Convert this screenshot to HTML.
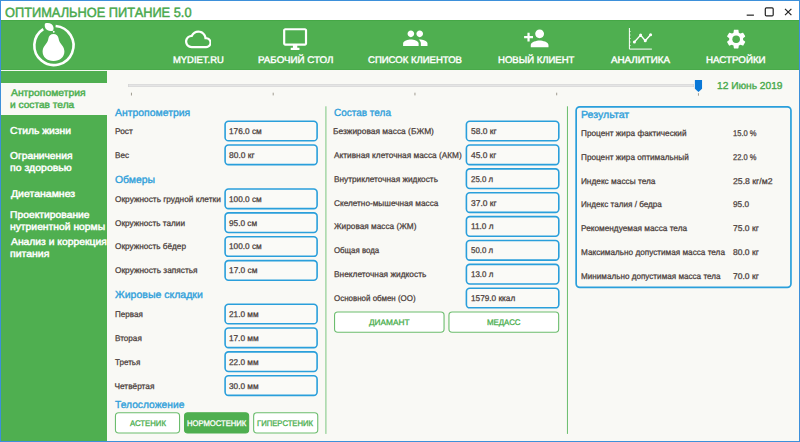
<!DOCTYPE html>
<html lang="ru"><head><meta charset="utf-8"><title>ОПТИМАЛЬНОЕ ПИТАНИЕ 5.0</title>
<style>
html,body{margin:0;padding:0;}
body{width:800px;height:442px;overflow:hidden;position:relative;background:#f9f9f5;font-family:"Liberation Sans", sans-serif;}
.t{position:absolute;white-space:pre;line-height:1;transform-origin:0 50%;text-rendering:geometricPrecision;}
.abs{position:absolute;}
.box{position:absolute;box-sizing:border-box;border:1.6px solid #2a9fdb;border-radius:4px;background:#fafaf7;}
.btn{position:absolute;box-sizing:border-box;border:1px solid #6dbd6f;border-radius:3px;background:#ffffff;}
.btn.sel{background:#4faf50;border-color:#4faf50;}
</style></head><body>
<div class="abs" style="left:0;top:0;width:800px;height:442px;background:#3d90da"></div>
<div class="abs" style="left:1px;top:1px;width:798px;height:440px;background:#f9f9f5"></div>
<div class="abs" style="left:1px;top:1px;width:798px;height:19px;background:#ffffff"></div>
<div class="abs" style="left:1px;top:20px;width:798px;height:50px;background:#4faf50"></div>
<div class="abs" style="left:1px;top:20px;width:798px;height:1px;background:#45a746"></div>
<div class="abs" style="left:1px;top:70px;width:106px;height:371px;background:#4faf50"></div>
<div class="abs" style="left:1px;top:70px;width:106px;height:1px;background:#f3faf1"></div>
<div class="abs" style="left:1px;top:69px;width:798px;height:1px;background:#49a94a"></div>
<div class="abs" style="left:1px;top:83px;width:106px;height:31.5px;background:#f9f9f5"></div>
<!-- window controls -->
<svg class="abs" style="left:740px;top:2px" width="58" height="17" viewBox="740 2 58 17" fill="none" stroke="#222" stroke-width="1.2">
<line x1="746.700" y1="15.150" x2="753.900" y2="15.150"/>
<rect x="765.300" y="7.850" width="7.900" height="7.950" rx="1.1"/>
<path d="M785.000 8.900 L791.400 15.100 M791.400 8.900 L785.000 15.100"/>
</svg>
<!-- logo -->
<svg class="abs" style="left:28px;top:20px" width="52" height="50" viewBox="28 20 52 50">
<path d="M55.61 25.97 A19.6 19.6 0 1 1 43.23 29.06" fill="none" stroke="#fff" stroke-width="2.6"/>
<path d="M53.5 34.1 C56.3 34.1 58.3 36.0 58.6 38.6 C58.9 41.2 60.2 43.0 62.0 45.2 C63.6 47.2 64.4 49.2 64.4 51.600 C64.4 57.2 60.0 61.0 53.5 61.0 C47.0 61.0 42.6 57.2 42.6 51.600 C42.6 49.2 43.4 47.2 45.0 45.2 C46.8 43.0 48.1 41.2 48.4 38.6 C48.7 36.0 50.7 34.1 53.5 34.1 Z" fill="#fff"/>
<path d="M45.0 23.600 C48.500 22.300 52.600 23.600 53.400 26.900 C53.800 28.600 53.400 30.000 52.800 30.800 C49.400 31.600 46.000 30.200 45.000 27.200 C44.600 25.900 44.700 24.600 45.000 23.600 Z" fill="#fff"/>
<circle cx="53.75" cy="31.700" r="0.95" fill="#fff"/>
</svg>
<!-- cloud -->
<svg class="abs" style="left:184.5px;top:25.55px" width="26.7" height="26.7" viewBox="0 0 24 24" fill="#fff"><path d="M19.35 10.04C18.67 6.59 15.64 4 12 4 9.11 4 6.6 5.64 5.35 8.04 2.34 8.36 0 10.91 0 14c0 3.310 2.690 6 6 6h13c2.760 0 5-2.240 5-5 0-2.640-2.050-4.780-4.650-4.960zM19 18H6c-2.210 0-4-1.790-4-4s1.790-4 4-4h.71C7.370 7.690 9.480 6 12 6c3.040 0 5.500 2.460 5.500 5.500v.5H19c1.660 0 3 1.340 3 3s-1.340 3-3 3z"/></svg>
<!-- desktop -->
<svg class="abs" style="left:282.4px;top:25.8px" width="26.2" height="26.2" viewBox="0 0 24 24" fill="#fff"><path d="M21 2H3c-1.100 0-2 .9-2 2v12c0 1.100.9 2 2 2h7v2H8v2h8v-2h-2v-2h7c1.100 0 2-.9 2-2V4c0-1.100-.9-2-2-2zm0 14H3V4h18v12z"/></svg>
<!-- people -->
<svg class="abs" style="left:402px;top:25.45px" width="26.6" height="26.6" viewBox="0 0 24 24" fill="#fff"><path d="M16 11c1.660 0 2.990-1.340 2.990-3S17.660 5 16 5c-1.660 0-3 1.340-3 3s1.340 3 3 3zm-8 0c1.660 0 2.990-1.340 2.990-3S9.660 5 8 5C6.340 5 5 6.340 5 8s1.340 3 3 3zm0 2c-2.330 0-7 1.170-7 3.500V19h14v-2.500c0-2.330-4.670-3.500-7-3.500zm8 0c-.29 0-.62.020-.97.050 1.160.84 1.970 1.970 1.970 3.450V19h6v-2.500c0-2.330-4.670-3.500-7-3.500z"/></svg>
<!-- person add -->
<svg class="abs" style="left:522.9px;top:25.3px" width="26.6" height="26.6" viewBox="0 0 24 24" fill="#fff"><path d="M15 12c2.210 0 4-1.790 4-4s-1.790-4-4-4-4 1.790-4 4 1.790 4 4 4zm-9-2V7H4v3H1v2h3v3h2v-3h3v-2H6zm9 4c-2.670 0-8 1.340-8 4v2h16v-2c0-2.660-5.330-4-8-4z"/></svg>
<!-- analytics -->
<svg class="abs" style="left:625px;top:25px" width="32" height="28" viewBox="625 25 32 28" fill="none" stroke="#fff">
<path d="M629.4 28 V49.1 H651.9" stroke-width="1"/>
<path d="M629.4 31.5h1.4M629.4 35h1.4M629.4 38.5h1.4M629.4 42h1.4M629.4 45.500h1.400" stroke-width="0.6"/>
<path d="M634.4 42 L640.6 35.1 L645.25 40.75 L650.6 34.75" stroke-width="1.4" stroke-linejoin="round"/>
<g fill="#fff" stroke="none"><circle cx="634.4" cy="42" r="1.5"/><circle cx="640.6" cy="35.1" r="1.5"/><circle cx="645.25" cy="40.75" r="1.5"/><circle cx="650.6" cy="34.75" r="1.5"/></g>
</svg>
<!-- settings -->
<svg class="abs" style="left:724.75px;top:28.25px" width="22.3" height="22.3" viewBox="0 0 24 24" fill="#fff"><path d="M19.430 12.980c.04-.32.070-.64.070-.98s-.03-.66-.07-.98l2.110-1.650c.19-.15.24-.42.120-.64l-2-3.460c-.12-.22-.39-.3-.61-.22l-2.490 1c-.52-.4-1.080-.73-1.690-.98l-.38-2.650C14.460 2.180 14.250 2 14 2h-4c-.25 0-.46.180-.49.420l-.38 2.650c-.61.250-1.170.59-1.690.98l-2.490-1c-.23-.09-.49 0-.61.220l-2 3.460c-.13.220-.07.490.12.640l2.110 1.650c-.04.320-.07.650-.07.980s.03.660.07.980l-2.110 1.650c-.19.150-.24.420-.12.640l2 3.460c.12.220.39.300.61.220l2.490-1c.52.400 1.080.73 1.690.98l.38 2.650c.03.240.24.420.49.420h4c.25 0 .46-.18.490-.42l.38-2.650c.61-.25 1.170-.59 1.690-.98l2.490 1c.23.090.49 0 .61-.22l2-3.460c.12-.22.070-.49-.12-.64l-2.110-1.650zM12 15.500c-1.930 0-3.500-1.570-3.500-3.500s1.570-3.500 3.500-3.500 3.500 1.570 3.500 3.500-1.570 3.500-3.500 3.500z"/><circle cx="12" cy="12" r="4.05" fill="#4faf50"/></svg>
<!-- slider -->
<div class="abs" style="left:127.9px;top:83.9px;width:566px;height:3.1px;background:#e5e5e5;box-shadow:inset 0 0 0 0.6px #d3d3d3"></div>
<svg class="abs" style="left:125px;top:78px" width="585" height="20" viewBox="125 78 585 20">
<g stroke="#a09c90" stroke-width="1"><path d="M131.45 92.700v2.800M273.200 92.700v2.700M414.950 92.700v2.700M556.700 92.700v2.600M698.450 93.200v2.500"/></g>
<path d="M694.900 79.900 h7.150 v8.900 l-3.575 3.200 l-3.575 -3.200 z" fill="#0a78d7"/>
</svg>
<!-- dividers -->
<svg class="abs" style="left:320px;top:100px" width="260" height="340" viewBox="320 100 260 340">
<rect x="325.150" y="106.300" width="1.450" height="327.600" fill="#a3d6a4"/>
<rect x="566.950" y="106.300" width="0.950" height="327.600" fill="#62ba65"/>
</svg>

<svg class="abs" style="left:0;top:0" width="800" height="442" viewBox="0 0 800 442">
<rect x="225.10" y="121.20" width="92.00" height="19.60" rx="3.4" fill="#fafaf7" stroke="#2a9fdb" stroke-width="1.6"/>
<rect x="225.10" y="145.06" width="92.00" height="19.60" rx="3.4" fill="#fafaf7" stroke="#2a9fdb" stroke-width="1.6"/>
<rect x="225.10" y="189.00" width="92.00" height="19.60" rx="3.4" fill="#fafaf7" stroke="#2a9fdb" stroke-width="1.6"/>
<rect x="225.10" y="212.86" width="92.00" height="19.60" rx="3.4" fill="#fafaf7" stroke="#2a9fdb" stroke-width="1.6"/>
<rect x="225.10" y="236.72" width="92.00" height="19.60" rx="3.4" fill="#fafaf7" stroke="#2a9fdb" stroke-width="1.6"/>
<rect x="225.10" y="260.58" width="92.00" height="19.60" rx="3.4" fill="#fafaf7" stroke="#2a9fdb" stroke-width="1.6"/>
<rect x="225.10" y="304.20" width="92.00" height="19.60" rx="3.4" fill="#fafaf7" stroke="#2a9fdb" stroke-width="1.6"/>
<rect x="225.10" y="328.06" width="92.00" height="19.60" rx="3.4" fill="#fafaf7" stroke="#2a9fdb" stroke-width="1.6"/>
<rect x="225.10" y="351.92" width="92.00" height="19.60" rx="3.4" fill="#fafaf7" stroke="#2a9fdb" stroke-width="1.6"/>
<rect x="225.10" y="375.78" width="92.00" height="19.60" rx="3.4" fill="#fafaf7" stroke="#2a9fdb" stroke-width="1.6"/>
<rect x="115.45" y="412.75" width="64.10" height="20.30" rx="3.2" fill="#ffffff" stroke="#6cbd6e" stroke-width="1.1"/>
<rect x="184.55" y="412.75" width="64.10" height="20.30" rx="3.2" fill="#4faf50" stroke="#4faf50" stroke-width="1.1"/>
<rect x="253.65" y="412.75" width="64.10" height="20.30" rx="3.2" fill="#ffffff" stroke="#6cbd6e" stroke-width="1.1"/>
<rect x="466.40" y="121.20" width="92.40" height="19.60" rx="3.4" fill="#fafaf7" stroke="#2a9fdb" stroke-width="1.6"/>
<rect x="466.40" y="145.06" width="92.40" height="19.60" rx="3.4" fill="#fafaf7" stroke="#2a9fdb" stroke-width="1.6"/>
<rect x="466.40" y="168.92" width="92.40" height="19.60" rx="3.4" fill="#fafaf7" stroke="#2a9fdb" stroke-width="1.6"/>
<rect x="466.40" y="192.78" width="92.40" height="19.60" rx="3.4" fill="#fafaf7" stroke="#2a9fdb" stroke-width="1.6"/>
<rect x="466.40" y="216.64" width="92.40" height="19.60" rx="3.4" fill="#fafaf7" stroke="#2a9fdb" stroke-width="1.6"/>
<rect x="466.40" y="240.50" width="92.40" height="19.60" rx="3.4" fill="#fafaf7" stroke="#2a9fdb" stroke-width="1.6"/>
<rect x="466.40" y="264.36" width="92.40" height="19.60" rx="3.4" fill="#fafaf7" stroke="#2a9fdb" stroke-width="1.6"/>
<rect x="466.40" y="288.22" width="92.40" height="19.60" rx="3.4" fill="#fafaf7" stroke="#2a9fdb" stroke-width="1.6"/>
<rect x="334.55" y="312.05" width="109.50" height="20.20" rx="3.2" fill="#ffffff" stroke="#6cbd6e" stroke-width="1.1"/>
<rect x="448.95" y="312.05" width="109.70" height="20.20" rx="3.2" fill="#ffffff" stroke="#6cbd6e" stroke-width="1.1"/>
<rect x="576.15" y="106.85" width="214.80" height="180.60" rx="3.6" fill="none" stroke="#2a9fdb" stroke-width="1.7"/>
</svg>
<span class="t" style="left:4.82px;top:6.00px;font-size:13.4px;color:#47a84b;transform:scaleX(0.9565);-webkit-text-stroke:0.45px #47a84b;">ОПТИМАЛЬНОЕ ПИТАНИЕ 5.0</span>
<span class="t" style="left:172.51px;top:56.00px;font-size:9.6px;color:#ffffff;transform:scaleX(0.9813);-webkit-text-stroke:0.4px #ffffff;">MYDIET.RU</span>
<span class="t" style="left:257.99px;top:56.00px;font-size:9.6px;color:#ffffff;transform:scaleX(1.0178);-webkit-text-stroke:0.4px #ffffff;">РАБОЧИЙ СТОЛ</span>
<span class="t" style="left:368.25px;top:56.00px;font-size:9.6px;color:#ffffff;transform:scaleX(0.9936);-webkit-text-stroke:0.4px #ffffff;">СПИСОК КЛИЕНТОВ</span>
<span class="t" style="left:497.60px;top:56.00px;font-size:9.6px;color:#ffffff;transform:scaleX(0.9954);-webkit-text-stroke:0.4px #ffffff;">НОВЫЙ КЛИЕНТ</span>
<span class="t" style="left:610.51px;top:56.00px;font-size:9.6px;color:#ffffff;transform:scaleX(1.0214);-webkit-text-stroke:0.4px #ffffff;">АНАЛИТИКА</span>
<span class="t" style="left:706.19px;top:56.00px;font-size:9.6px;color:#ffffff;transform:scaleX(1.0174);-webkit-text-stroke:0.4px #ffffff;">НАСТРОЙКИ</span>
<span class="t" style="left:10.56px;top:89.00px;font-size:10px;color:#4caf50;transform:scaleX(1.0333);-webkit-text-stroke:0.45px #4caf50;">Антропометрия</span>
<span class="t" style="left:9.79px;top:101.00px;font-size:10px;color:#4caf50;transform:scaleX(1.0159);-webkit-text-stroke:0.45px #4caf50;">и состав тела</span>
<span class="t" style="left:10.04px;top:127.00px;font-size:10px;color:#ffffff;transform:scaleX(1.0308);-webkit-text-stroke:0.45px #ffffff;">Стиль жизни</span>
<span class="t" style="left:10.04px;top:152.00px;font-size:10px;color:#ffffff;transform:scaleX(1.0257);-webkit-text-stroke:0.45px #ffffff;">Ограничения</span>
<span class="t" style="left:9.77px;top:164.00px;font-size:10px;color:#ffffff;transform:scaleX(1.0517);-webkit-text-stroke:0.45px #ffffff;">по здоровью</span>
<span class="t" style="left:10.56px;top:190.00px;font-size:10px;color:#ffffff;transform:scaleX(1.0498);-webkit-text-stroke:0.45px #ffffff;">Диетанамнез</span>
<span class="t" style="left:9.78px;top:211.00px;font-size:10px;color:#ffffff;transform:scaleX(1.0327);-webkit-text-stroke:0.45px #ffffff;">Проектирование</span>
<span class="t" style="left:9.78px;top:223.00px;font-size:10px;color:#ffffff;transform:scaleX(1.0334);-webkit-text-stroke:0.45px #ffffff;">нутриентной нормы</span>
<span class="t" style="left:10.56px;top:238.00px;font-size:10px;color:#ffffff;transform:scaleX(1.0324);-webkit-text-stroke:0.45px #ffffff;">Анализ и коррекция</span>
<span class="t" style="left:9.78px;top:250.00px;font-size:10px;color:#ffffff;transform:scaleX(1.0476);-webkit-text-stroke:0.45px #ffffff;">питания</span>
<span class="t" style="left:717.10px;top:82.00px;font-size:10.1px;color:#48aa4c;transform:scaleX(1.0086);-webkit-text-stroke:0.35px #48aa4c;">12 Июнь 2019</span>
<span class="t" style="left:115.25px;top:109.00px;font-size:10.3px;color:#2f9fda;transform:scaleX(1.0135);-webkit-text-stroke:0.35px #2f9fda;">Антропометрия</span>
<span class="t" style="left:114.50px;top:127.00px;font-size:8.3px;color:#4a3d3a;transform:scaleX(1.0087);-webkit-text-stroke:0.25px #4a3d3a;">Рост</span>
<span class="t" style="left:228.90px;top:127.00px;font-size:8.3px;color:#4a3d3a;transform:scaleX(0.9938);-webkit-text-stroke:0.25px #4a3d3a;">176.0 см</span>
<span class="t" style="left:114.51px;top:151.00px;font-size:8.3px;color:#4a3d3a;transform:scaleX(0.9818);-webkit-text-stroke:0.25px #4a3d3a;">Вес</span>
<span class="t" style="left:229.15px;top:151.00px;font-size:8.3px;color:#4a3d3a;transform:scaleX(1.0182);-webkit-text-stroke:0.25px #4a3d3a;">80.0 кг</span>
<span class="t" style="left:114.75px;top:176.00px;font-size:10.3px;color:#2f9fda;transform:scaleX(1.0116);-webkit-text-stroke:0.35px #2f9fda;">Обмеры</span>
<span class="t" style="left:114.75px;top:195.00px;font-size:8.3px;color:#4a3d3a;transform:scaleX(1.0024);-webkit-text-stroke:0.25px #4a3d3a;">Окружность грудной клетки</span>
<span class="t" style="left:228.90px;top:195.00px;font-size:8.3px;color:#4a3d3a;transform:scaleX(0.9938);-webkit-text-stroke:0.25px #4a3d3a;">100.0 см</span>
<span class="t" style="left:114.75px;top:219.00px;font-size:8.3px;color:#4a3d3a;transform:scaleX(0.9914);-webkit-text-stroke:0.25px #4a3d3a;">Окружность талии</span>
<span class="t" style="left:229.15px;top:219.00px;font-size:8.3px;color:#4a3d3a;transform:scaleX(0.9946);-webkit-text-stroke:0.25px #4a3d3a;">95.0 см</span>
<span class="t" style="left:114.75px;top:242.00px;font-size:8.3px;color:#4a3d3a;transform:scaleX(0.9909);-webkit-text-stroke:0.25px #4a3d3a;">Окружность бёдер</span>
<span class="t" style="left:228.90px;top:242.00px;font-size:8.3px;color:#4a3d3a;transform:scaleX(0.9938);-webkit-text-stroke:0.25px #4a3d3a;">100.0 см</span>
<span class="t" style="left:114.75px;top:266.00px;font-size:8.3px;color:#4a3d3a;transform:scaleX(1.0031);-webkit-text-stroke:0.25px #4a3d3a;">Окружность запястья</span>
<span class="t" style="left:228.90px;top:266.00px;font-size:8.3px;color:#4a3d3a;transform:scaleX(1.0036);-webkit-text-stroke:0.25px #4a3d3a;">17.0 см</span>
<span class="t" style="left:115.00px;top:291.00px;font-size:10.3px;color:#2f9fda;transform:scaleX(1.0222);-webkit-text-stroke:0.35px #2f9fda;">Жировые складки</span>
<span class="t" style="left:114.51px;top:310.00px;font-size:8.3px;color:#4a3d3a;transform:scaleX(0.9730);-webkit-text-stroke:0.25px #4a3d3a;">Первая</span>
<span class="t" style="left:229.15px;top:310.00px;font-size:8.3px;color:#4a3d3a;transform:scaleX(0.9915);-webkit-text-stroke:0.25px #4a3d3a;">21.0 мм</span>
<span class="t" style="left:114.51px;top:334.00px;font-size:8.3px;color:#4a3d3a;transform:scaleX(0.9811);-webkit-text-stroke:0.25px #4a3d3a;">Вторая</span>
<span class="t" style="left:228.90px;top:334.00px;font-size:8.3px;color:#4a3d3a;-webkit-text-stroke:0.25px #4a3d3a;">17.0 мм</span>
<span class="t" style="left:115.00px;top:358.00px;font-size:8.3px;color:#4a3d3a;transform:scaleX(0.9709);-webkit-text-stroke:0.25px #4a3d3a;">Третья</span>
<span class="t" style="left:229.15px;top:358.00px;font-size:8.3px;color:#4a3d3a;transform:scaleX(0.9915);-webkit-text-stroke:0.25px #4a3d3a;">22.0 мм</span>
<span class="t" style="left:114.50px;top:382.00px;font-size:8.3px;color:#4a3d3a;-webkit-text-stroke:0.25px #4a3d3a;">Четвёртая</span>
<span class="t" style="left:229.15px;top:382.00px;font-size:8.3px;color:#4a3d3a;transform:scaleX(0.9915);-webkit-text-stroke:0.25px #4a3d3a;">30.0 мм</span>
<span class="t" style="left:115.00px;top:401.00px;font-size:10.3px;color:#2f9fda;transform:scaleX(0.9964);-webkit-text-stroke:0.35px #2f9fda;">Телосложение</span>
<span class="t" style="left:129.84px;top:420.00px;font-size:8.1px;color:#4caf50;transform:scaleX(0.9579);-webkit-text-stroke:0.3px #4caf50;">АСТЕНИК</span>
<span class="t" style="left:186.53px;top:420.00px;font-size:8.1px;color:#ffffff;transform:scaleX(0.9440);-webkit-text-stroke:0.3px #ffffff;">НОРМОСТЕНИК</span>
<span class="t" style="left:256.93px;top:420.00px;font-size:8.1px;color:#4caf50;transform:scaleX(0.9498);-webkit-text-stroke:0.3px #4caf50;">ГИПЕРСТЕНИК</span>
<span class="t" style="left:333.76px;top:109.00px;font-size:10.3px;color:#2f9fda;transform:scaleX(0.9702);-webkit-text-stroke:0.35px #2f9fda;">Состав тела</span>
<span class="t" style="left:333.49px;top:127.00px;font-size:8.3px;color:#4a3d3a;transform:scaleX(1.0101);-webkit-text-stroke:0.25px #4a3d3a;">Безжировая масса (БЖМ)</span>
<span class="t" style="left:470.75px;top:127.00px;font-size:8.3px;color:#4a3d3a;transform:scaleX(1.0182);-webkit-text-stroke:0.25px #4a3d3a;">58.0 кг</span>
<span class="t" style="left:334.00px;top:151.00px;font-size:8.3px;color:#4a3d3a;-webkit-text-stroke:0.25px #4a3d3a;">Активная клеточная масса (АКМ)</span>
<span class="t" style="left:471.00px;top:151.00px;font-size:8.3px;color:#4a3d3a;transform:scaleX(1.0080);-webkit-text-stroke:0.25px #4a3d3a;">45.0 кг</span>
<span class="t" style="left:333.50px;top:175.00px;font-size:8.3px;color:#4a3d3a;transform:scaleX(0.9966);-webkit-text-stroke:0.25px #4a3d3a;">Внутриклеточная жидкость</span>
<span class="t" style="left:470.76px;top:175.00px;font-size:8.3px;color:#4a3d3a;transform:scaleX(0.9495);-webkit-text-stroke:0.25px #4a3d3a;">25.0 л</span>
<span class="t" style="left:333.75px;top:199.00px;font-size:8.3px;color:#4a3d3a;transform:scaleX(0.9924);-webkit-text-stroke:0.25px #4a3d3a;">Скелетно-мышечная масса</span>
<span class="t" style="left:470.75px;top:199.00px;font-size:8.3px;color:#4a3d3a;transform:scaleX(1.0182);-webkit-text-stroke:0.25px #4a3d3a;">37.0 кг</span>
<span class="t" style="left:334.00px;top:222.00px;font-size:8.3px;color:#4a3d3a;transform:scaleX(0.9939);-webkit-text-stroke:0.25px #4a3d3a;">Жировая масса (ЖМ)</span>
<span class="t" style="left:470.50px;top:222.00px;font-size:8.3px;color:#4a3d3a;transform:scaleX(0.9931);-webkit-text-stroke:0.25px #4a3d3a;">11.0 л</span>
<span class="t" style="left:333.76px;top:246.00px;font-size:8.3px;color:#4a3d3a;transform:scaleX(0.9474);-webkit-text-stroke:0.25px #4a3d3a;">Общая вода</span>
<span class="t" style="left:470.76px;top:246.00px;font-size:8.3px;color:#4a3d3a;transform:scaleX(0.9495);-webkit-text-stroke:0.25px #4a3d3a;">50.0 л</span>
<span class="t" style="left:333.50px;top:270.00px;font-size:8.3px;color:#4a3d3a;transform:scaleX(1.0066);-webkit-text-stroke:0.25px #4a3d3a;">Внеклеточная жидкость</span>
<span class="t" style="left:470.52px;top:270.00px;font-size:8.3px;color:#4a3d3a;transform:scaleX(0.9600);-webkit-text-stroke:0.25px #4a3d3a;">13.0 л</span>
<span class="t" style="left:333.76px;top:294.00px;font-size:8.3px;color:#4a3d3a;transform:scaleX(0.9586);-webkit-text-stroke:0.25px #4a3d3a;">Основной обмен (ОО)</span>
<span class="t" style="left:470.50px;top:294.00px;font-size:8.3px;color:#4a3d3a;transform:scaleX(0.9920);-webkit-text-stroke:0.25px #4a3d3a;">1579.0 ккал</span>
<span class="t" style="left:369.00px;top:319.00px;font-size:8.1px;color:#4caf50;transform:scaleX(1.0214);-webkit-text-stroke:0.3px #4caf50;">ДИАМАНТ</span>
<span class="t" style="left:486.51px;top:319.00px;font-size:8.1px;color:#4caf50;transform:scaleX(0.9706);-webkit-text-stroke:0.3px #4caf50;">МЕДАСС</span>
<span class="t" style="left:580.63px;top:111.00px;font-size:10.3px;color:#2f9fda;transform:scaleX(1.0292);-webkit-text-stroke:0.35px #2f9fda;">Результат</span>
<span class="t" style="left:580.90px;top:129.00px;font-size:8.3px;color:#4a3d3a;transform:scaleX(0.9915);-webkit-text-stroke:0.25px #4a3d3a;">Процент жира фактический</span>
<span class="t" style="left:732.54px;top:129.00px;font-size:8.3px;color:#4a3d3a;transform:scaleX(0.9109);-webkit-text-stroke:0.25px #4a3d3a;">15.0 %</span>
<span class="t" style="left:580.91px;top:153.00px;font-size:8.3px;color:#4a3d3a;transform:scaleX(0.9885);-webkit-text-stroke:0.25px #4a3d3a;">Процент жира оптимальный</span>
<span class="t" style="left:732.77px;top:153.00px;font-size:8.3px;color:#4a3d3a;transform:scaleX(0.9020);-webkit-text-stroke:0.25px #4a3d3a;">22.0 %</span>
<span class="t" style="left:580.90px;top:177.00px;font-size:8.3px;color:#4a3d3a;-webkit-text-stroke:0.25px #4a3d3a;">Индекс массы тела</span>
<span class="t" style="left:732.74px;top:177.00px;font-size:8.3px;color:#4a3d3a;transform:scaleX(1.0470);-webkit-text-stroke:0.25px #4a3d3a;">25.8 кг/м2</span>
<span class="t" style="left:580.91px;top:200.00px;font-size:8.3px;color:#4a3d3a;transform:scaleX(0.9799);-webkit-text-stroke:0.25px #4a3d3a;">Индекс талия / бедра</span>
<span class="t" style="left:732.75px;top:200.00px;font-size:8.3px;color:#4a3d3a;transform:scaleX(0.9905);-webkit-text-stroke:0.25px #4a3d3a;">95.0</span>
<span class="t" style="left:580.90px;top:224.00px;font-size:8.3px;color:#4a3d3a;transform:scaleX(0.9939);-webkit-text-stroke:0.25px #4a3d3a;">Рекомендуемая масса тела</span>
<span class="t" style="left:732.74px;top:224.00px;font-size:8.3px;color:#4a3d3a;transform:scaleX(1.0263);-webkit-text-stroke:0.25px #4a3d3a;">75.0 кг</span>
<span class="t" style="left:580.91px;top:248.00px;font-size:8.3px;color:#4a3d3a;transform:scaleX(0.9869);-webkit-text-stroke:0.25px #4a3d3a;">Максимально допустимая масса тела</span>
<span class="t" style="left:732.74px;top:248.00px;font-size:8.3px;color:#4a3d3a;transform:scaleX(1.0263);-webkit-text-stroke:0.25px #4a3d3a;">80.0 кг</span>
<span class="t" style="left:580.91px;top:272.00px;font-size:8.3px;color:#4a3d3a;transform:scaleX(0.9793);-webkit-text-stroke:0.25px #4a3d3a;">Минимально допустимая масса тела</span>
<span class="t" style="left:732.74px;top:272.00px;font-size:8.3px;color:#4a3d3a;transform:scaleX(1.0263);-webkit-text-stroke:0.25px #4a3d3a;">70.0 кг</span>
</body></html>
